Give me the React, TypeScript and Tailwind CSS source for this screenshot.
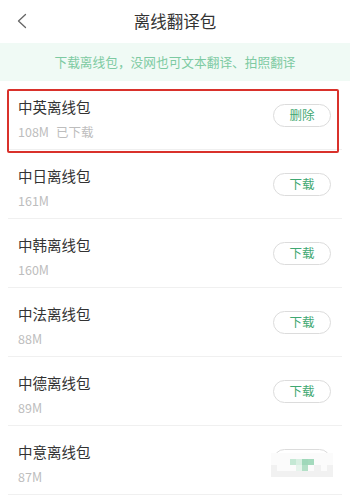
const packs = [
  { name: "中英离线包", size: "108M", status: "已下载", action: "删除" },
  { name: "中日离线包", size: "161M", action: "下载" },
  { name: "中韩离线包", size: "160M", action: "下载" },
  { name: "中法离线包", size: "88M", action: "下载" },
  { name: "中德离线包", size: "89M", action: "下载" },
  { name: "中意离线包", size: "87M", action: "下载", mosaic: true },
];

// pixelated blur cells, 10 x 4
const W = "#fbfbfb";
const G = "#f1f1f1";
const mosaicCells = [
  W, W, W, W, W, W, W, W, W, W,
  W, W, W, "#c4e8d4", "#d8efe2", "#9fd8ba", "#a4dabd", W, W, W,
  G, W, W, W, "#e6f4ec", "#b3e0c7", W, G, W, G,
  G, G, G, G, G, G, G, G, G, G,
];

function Mosaic() {
  return (
    <div className="absolute left-[-2px] top-[4px] w-[62px] grid grid-cols-10">
      {mosaicCells.map((c, i) => (
        <div key={i} className="h-[6px]" style={{ backgroundColor: c }} />
      ))}
    </div>
  );
}

export default function App() {
  return (
    <div
      className="w-[350px] h-[496px] bg-white overflow-hidden relative"
      style={{ fontFamily: '"Noto Sans CJK SC", "Noto Sans", sans-serif' }}
    >
      {/* header */}
      <div className="h-[43px] flex items-center justify-center relative">
        <svg
          className="absolute left-[16px] top-[13px]"
          width="12"
          height="16"
          viewBox="0 0 12 16"
          fill="none"
        >
          <path d="M9.5 1.5 L2.5 8 L9.5 14.5" stroke="#666" strokeWidth="1.3" strokeLinecap="round" strokeLinejoin="round" />
        </svg>
        <span className="text-[16.5px] text-[#333] leading-none">离线翻译包</span>
      </div>

      {/* banner */}
      <div className="h-[38px] bg-[#f0faf5] flex items-center justify-center">
        <span className="text-[12.7px] text-[#7dcaa2] leading-none">
          下载离线包，没网也可文本翻译、拍照翻译
        </span>
      </div>

      {/* list */}
      <div className="mx-[8px]">
        {packs.map((p) => (
          <div key={p.name} className="h-[69px] flex justify-between border-b border-[#f0f0f0] px-[10px]">
            <div className="pt-[16px]">
              <div className="text-[14.5px] leading-[20px] text-[#333]">{p.name}</div>
              <div className="mt-[6px] text-[12.5px] leading-[18px] text-[#bdbdbd] flex gap-[7px]">
                <span>{p.size}</span>
                {p.status && <span>{p.status}</span>}
              </div>
            </div>
            <div className="self-center relative mt-[1px] mr-[1px]">
              <div className="w-[58px] h-[23px] rounded-full border border-[#dcdcdc] flex items-center justify-center text-[12.5px] text-[#3fa872] leading-none">
                {p.action}
              </div>
              {p.mosaic && <Mosaic />}
            </div>
          </div>
        ))}
      </div>

      {/* annotation box */}
      <div className="absolute left-[7px] top-[89px] w-[332px] h-[64px] border-2 border-[#d9312b] rounded-[2px] pointer-events-none" />
    </div>
  );
}
